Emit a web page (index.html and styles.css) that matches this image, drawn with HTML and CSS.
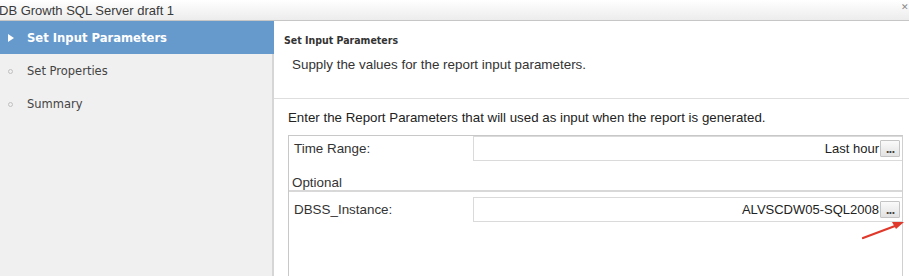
FILE: index.html
```html
<!doctype html>
<html lang="en">
<head>
  <meta charset="utf-8" />
  <title>DB Growth SQL Server draft 1</title>
  <link rel="stylesheet" href="styles.css">
</head>
<body>
  <div class="dialog">
    <div class="titlebar">
      <span class="title">DB Growth SQL Server draft 1</span>
      <span class="close">&#x2715;</span>
    </div>
    <div class="main">
      <!-- Wizard steps -->
      <ul class="steps">
        <li class="step current"><span class="marker tri"></span>Set Input Parameters</li>
        <li class="step"><span class="marker dot"></span>Set Properties</li>
        <li class="step"><span class="marker dot"></span>Summary</li>
      </ul>

      <!-- Step content -->
      <div class="content">
        <div class="head">
          <h2>Set Input Parameters</h2>
          <p>Supply the values for the report input parameters.</p>
        </div>
        <div class="body">
          <p class="intro">Enter the Report Parameters that will used as input when the report is generated.</p>
          <div class="params">
            <div class="param">
              <label>Time Range:</label>
              <div class="field"><span class="value">Last hour</span><button class="pick">...</button></div>
            </div>
            <div class="group">Optional</div>
            <div class="param">
              <label>DBSS_Instance:</label>
              <div class="field"><span class="value">ALVSCDW05-SQL2008</span><button class="pick">...</button></div>
            </div>
          </div>
        </div>
        <svg class="arrow" width="60" height="30" viewBox="0 0 60 30">
          <line x1="2" y1="27" x2="34" y2="15" stroke="#e0392b" stroke-width="2.2" stroke-linecap="round"/>
          <polygon points="43,11 31,11 35,18" fill="#e0392b"/>
        </svg>
      </div>
    </div>
  </div>
</body>
</html>
```

FILE: styles.css
```css
html, body { margin:0; padding:0; }
body {
  width:909px; height:276px; overflow:hidden; background:#fff;
  font-family:"Liberation Sans", Arial, sans-serif; color:#333;
}
.dialog { display:flex; flex-direction:column; height:276px; }
/* Title bar */
.titlebar {
  height:20px; flex:none; display:flex; align-items:center; justify-content:space-between;
  background:linear-gradient(#ffffff,#ececec);
  border-bottom:1px solid #c6c6c6;
  font-size:13px; color:#3a3a3a;
}
.title { margin-left:-1px; }
.close { font-size:9px; color:#888; margin-top:-6px; }
.main { flex:1; display:flex; min-height:0; }
/* Steps */
.steps {
  list-style:none; margin:0; padding:0; width:272px; flex:none;
  background:#f0f0f0; border-right:2px solid #d6d6d6;
  font-family:"DejaVu Sans", Verdana, sans-serif; font-size:11.5px; color:#444;
}
.step { height:33px; display:flex; align-items:center; padding-left:27px; position:relative; }
.step.current {
  height:32px; padding-top:1px;
  background:#6699cc; color:#fff; font-weight:bold; font-size:11.6px;
  margin-right:-2px;
}
.marker { position:absolute; }
.tri {
  left:8px; top:13px; width:0; height:0;
  border-left:6px solid #fff; border-top:4px solid transparent; border-bottom:4px solid transparent;
}
.dot {
  left:8px; top:15px; width:3px; height:3px; border-radius:50%;
  border:1px solid #c0c0c0;
}
/* Content */
.content { flex:1; position:relative; display:flex; flex-direction:column; }
.head { height:77px; flex:none; border-bottom:1px solid #dedede; padding:0 0 0 10px; }
.head h2 {
  margin:0; padding-top:13px; font-family:"DejaVu Sans Condensed","DejaVu Sans", sans-serif;
  font-size:10.5px; font-weight:bold; color:#333;
}
.head p { margin:11px 0 0 8px; font-size:13.4px; line-height:15px; color:#333; }
.body { flex:1; min-height:0; display:flex; flex-direction:column; padding:11px 6px 0 14px; }
.intro { margin:0 0 10px; font-size:13.3px; line-height:15px; color:#222; }
.params { flex:1; border:1px solid #c8c8c8; border-bottom:none; border-right-color:#d0d0d0; }
.param { display:flex; align-items:center; }
.param label { width:179px; padding-left:5px; font-size:13.4px; line-height:15px; color:#333; flex:none; }
.field {
  flex:1; height:23px; display:flex; align-items:center; justify-content:flex-end;
  border:1px solid #dadada; border-right:none; padding-right:2px;
  font-size:13px; color:#222;
}
.pick {
  width:20px; height:17px; padding:0; margin:0 0 0 1px;
  border:1px solid #c4c4c4; border-radius:1px;
  background:linear-gradient(#fafafa,#e2e2e2);
  font-family:"DejaVu Sans", sans-serif; font-size:10px; font-weight:bold; color:#444;
  line-height:17px; letter-spacing:-1px;
}
.group {
  margin:14px 0 5px; padding:0 0 0 3px; border-bottom:2px solid #d8d8d8;
  font-size:13.4px; line-height:15px; color:#333;
}
.arrow { position:absolute; left:587px; top:190px; }
```
